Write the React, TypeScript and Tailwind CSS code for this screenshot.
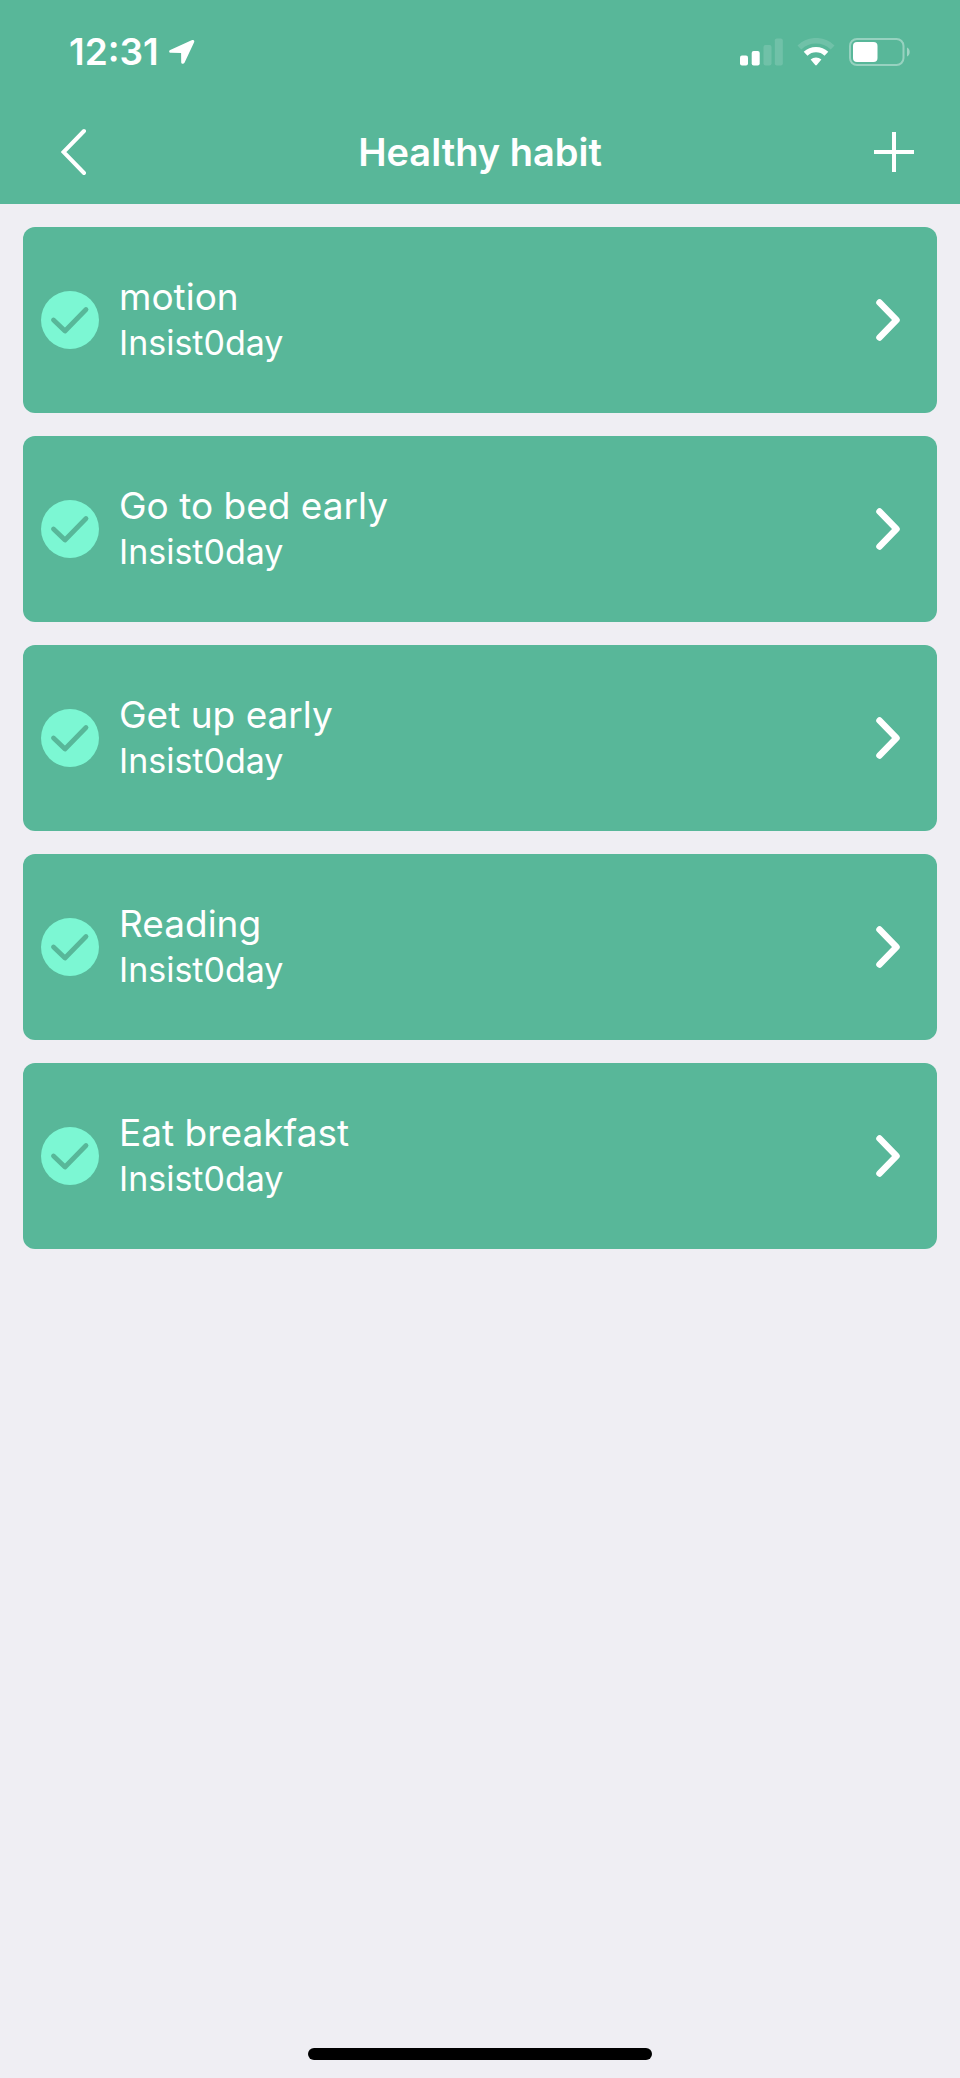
const habits = [
  { name: "motion", days: 0 },
  { name: "Go to bed early", days: 0 },
  { name: "Get up early", days: 0 },
  { name: "Reading", days: 0 },
  { name: "Eat breakfast", days: 0 },
];

function LocationArrow() {
  return (
    <svg width="26" height="26" viewBox="0 0 26 26" fill="white" aria-hidden="true">
      <path d="M1.2 11.1 L22.6 1.2 C24.6 0.3 25.9 1.6 25 3.6 L15.5 23.8 C14.7 25.4 12.2 25 12.2 23.2 L12.1 13.9 L2 13.8 C-0.1 13.7 -0.5 11.9 1.2 11.1 Z" />
    </svg>
  );
}

function SignalBars() {
  return (
    <svg width="43" height="28" viewBox="0 0 43 28" fill="white" aria-hidden="true">
      <rect x="0" y="17.5" width="8" height="10" rx="2" />
      <rect x="11.7" y="13" width="8" height="14.5" rx="2" />
      <rect x="23.5" y="7" width="8" height="20.5" rx="2" opacity="0.15" />
      <rect x="34.8" y="0.5" width="8" height="27" rx="2" opacity="0.15" />
    </svg>
  );
}

function WifiIcon() {
  return (
    <svg width="38" height="28" viewBox="0 0 38 28" aria-hidden="true">
      <path d="M2.4 9.4 A24 24 0 0 1 35.6 9.4" fill="none" stroke="white" strokeWidth="5.6" opacity="0.15" />
      <path d="M8.6 15.8 A15 15 0 0 1 29.4 15.8" fill="none" stroke="white" strokeWidth="5.4" />
      <path d="M13.6 21.6 A8 8 0 0 1 24.4 21.6 L19.8 27 Q19 27.9 18.2 27 Z" fill="white" />
    </svg>
  );
}

function BatteryIcon() {
  return (
    <svg width="62" height="28" viewBox="0 0 62 28" aria-hidden="true">
      <rect x="1" y="1" width="53.5" height="26" rx="7" fill="none" stroke="white" strokeWidth="2" opacity="0.38" />
      <rect x="4" y="4" width="24.5" height="20" rx="4" fill="white" />
      <path d="M58 9.5 C61.6 11 61.6 17 58 18.5 Z" fill="white" opacity="0.42" />
    </svg>
  );
}

function StatusBar() {
  return (
    <div className="flex h-[104px] items-center justify-between pl-[69px] pr-[49px]">
      <div className="flex items-center gap-[10px]">
        <time className="text-[37px] leading-[44px] font-semibold">12:31</time>
        <LocationArrow />
      </div>
      <div className="flex items-center gap-[14px]">
        <SignalBars />
        <WifiIcon />
        <BatteryIcon />
      </div>
    </div>
  );
}

function NavBar() {
  return (
    <div className="flex h-24 items-center justify-between px-[46px]">
      <button type="button" aria-label="Back" className="flex h-12 w-14 items-center justify-center">
        <svg width="26" height="48" viewBox="0 0 26 48" fill="none" stroke="white" strokeWidth="4" strokeLinecap="round" aria-hidden="true">
          <path d="M23 3 L2.5 24 L23 45" />
        </svg>
      </button>
      <h1 className="text-[38px] leading-[46px] font-semibold">Healthy habit</h1>
      <button type="button" aria-label="Add habit" className="flex h-12 w-14 items-center justify-end">
        <svg width="40" height="40" viewBox="0 0 40 40" fill="none" stroke="white" strokeWidth="4" aria-hidden="true">
          <path d="M20 0 V40 M0 20 H40" />
        </svg>
      </button>
    </div>
  );
}

function HabitCard({ name, days }: { name: string; days: number }) {
  return (
    <li>
      <button
        type="button"
        className="flex h-[186px] w-full items-center rounded-xl bg-[#58b799] pl-[18px] pr-9 text-left text-white"
      >
        <svg width="58" height="58" viewBox="0 0 58 58" className="shrink-0" aria-hidden="true">
          <circle cx="29" cy="29" r="29" fill="#7cf7d3" />
          <path d="M12.5 29 L24 40 L45 18.5" fill="none" stroke="#58b799" strokeWidth="4.8" strokeLinecap="round" strokeLinejoin="round" />
        </svg>
        <span className="ml-5 flex grow flex-col">
          <span className="text-[37px] leading-[46px]">{name}</span>
          <span className="text-[34px] leading-[46px]">Insist{days}day</span>
        </span>
        <svg width="26" height="44" viewBox="0 0 26 44" fill="none" stroke="white" strokeWidth="6.5" strokeLinecap="round" strokeLinejoin="round" className="shrink-0" aria-hidden="true">
          <path d="M4.5 4.5 L21.5 22 L4.5 39.5" />
        </svg>
      </button>
    </li>
  );
}

export default function App() {
  return (
    <div className="flex min-h-screen flex-col bg-[#efeef3] font-['Inter','Liberation_Sans',sans-serif]">
      <header className="bg-[#58b799] pb-1 text-white">
        <StatusBar />
        <NavBar />
      </header>
      <main className="grow p-[23px]">
        <ul className="flex flex-col gap-[23px]">
          {habits.map((habit) => (
            <HabitCard key={habit.name} name={habit.name} days={habit.days} />
          ))}
        </ul>
      </main>
      <div className="flex justify-center pb-[18px]">
        <div className="h-3 w-[344px] rounded-full bg-black" />
      </div>
    </div>
  );
}
